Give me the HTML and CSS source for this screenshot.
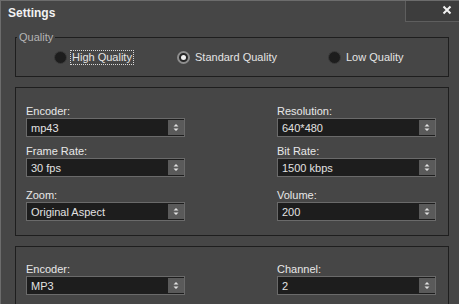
FILE: index.html
```html
<!DOCTYPE html>
<html lang="en">
<head>
  <meta charset="UTF-8" />
  <title>Settings</title>
  <link rel="stylesheet" href="styles.css">
</head>
<body>

  <div class="window">
    <div class="titlebar">
      <span class="title">Settings</span>
      <button class="close">
        <svg width="10" height="10" viewBox="0 0 10 10"><path d="M1.5 1.5 L8.5 8.5 M8.5 1.5 L1.5 8.5" stroke="#f2f2f2" stroke-width="2"/></svg>
      </button>
    </div>

    <!-- Quality -->
    <fieldset class="quality">
      <legend>Quality</legend>
      <div class="radios">
        <label class="radio"><span class="dot"></span><span class="text focus">High Quality</span></label>
        <label class="radio"><span class="dot checked"></span><span class="text">Standard Quality</span></label>
        <label class="radio"><span class="dot"></span><span class="text">Low Quality</span></label>
      </div>
    </fieldset>

    <!-- Video -->
    <div class="panel">
      <div class="field">
        <div class="label">Encoder:</div>
        <div class="select"><span class="value">mp43</span><span class="spin"><svg width="16" height="15" viewBox="0 0 16 15"><path d="M5.5 6.5 L8 4 L10.5 6.5 Z M5.5 8.5 L8 11 L10.5 8.5 Z" fill="#e0e0e0"/></svg></span></div>
      </div>
      <div class="field">
        <div class="label">Resolution:</div>
        <div class="select"><span class="value">640*480</span><span class="spin"><svg width="16" height="15" viewBox="0 0 16 15"><path d="M5.5 6.5 L8 4 L10.5 6.5 Z M5.5 8.5 L8 11 L10.5 8.5 Z" fill="#e0e0e0"/></svg></span></div>
      </div>
      <div class="field">
        <div class="label">Frame Rate:</div>
        <div class="select"><span class="value">30 fps</span><span class="spin"><svg width="16" height="15" viewBox="0 0 16 15"><path d="M5.5 6.5 L8 4 L10.5 6.5 Z M5.5 8.5 L8 11 L10.5 8.5 Z" fill="#e0e0e0"/></svg></span></div>
      </div>
      <div class="field">
        <div class="label">Bit Rate:</div>
        <div class="select"><span class="value">1500 kbps</span><span class="spin"><svg width="16" height="15" viewBox="0 0 16 15"><path d="M5.5 6.5 L8 4 L10.5 6.5 Z M5.5 8.5 L8 11 L10.5 8.5 Z" fill="#e0e0e0"/></svg></span></div>
      </div>
      <div class="field wide-gap">
        <div class="label">Zoom:</div>
        <div class="select"><span class="value">Original Aspect</span><span class="spin"><svg width="16" height="15" viewBox="0 0 16 15"><path d="M5.5 6.5 L8 4 L10.5 6.5 Z M5.5 8.5 L8 11 L10.5 8.5 Z" fill="#e0e0e0"/></svg></span></div>
      </div>
      <div class="field wide-gap">
        <div class="label">Volume:</div>
        <div class="select"><span class="value">200</span><span class="spin"><svg width="16" height="15" viewBox="0 0 16 15"><path d="M5.5 6.5 L8 4 L10.5 6.5 Z M5.5 8.5 L8 11 L10.5 8.5 Z" fill="#e0e0e0"/></svg></span></div>
      </div>
    </div>

    <!-- Audio -->
    <div class="panel audio">
      <div class="field">
        <div class="label">Encoder:</div>
        <div class="select"><span class="value">MP3</span><span class="spin"><svg width="16" height="15" viewBox="0 0 16 15"><path d="M5.5 6.5 L8 4 L10.5 6.5 Z M5.5 8.5 L8 11 L10.5 8.5 Z" fill="#e0e0e0"/></svg></span></div>
      </div>
      <div class="field">
        <div class="label">Channel:</div>
        <div class="select"><span class="value">2</span><span class="spin"><svg width="16" height="15" viewBox="0 0 16 15"><path d="M5.5 6.5 L8 4 L10.5 6.5 Z M5.5 8.5 L8 11 L10.5 8.5 Z" fill="#e0e0e0"/></svg></span></div>
      </div>
    </div>
  </div>

</body>
</html>
```

FILE: styles.css
```css
* { margin: 0; padding: 0; box-sizing: border-box; }

body {
  width: 459px;
  height: 304px;
  overflow: hidden;
  background: #464646;
  font-family: 'Liberation Sans', Arial, sans-serif;
  font-size: 11px;
  color: #e4e4e4;
}

.window {
  height: 304px;
  border-left: 1px solid #6c6c6c;
  border-top: 1px solid #6c6c6c;
}

.titlebar {
  display: flex;
  justify-content: space-between;
  height: 21px;
}

.title {
  padding: 2px 0 0 7px;
  font-size: 12px;
  font-weight: bold;
  line-height: 21px;
  color: #f2f2f2;
}

.close {
  width: 54px;
  height: 21px;
  background: #3d3d3d;
  border: none;
  border-left: 1px solid #5e5e5e;
  border-bottom: 1px solid #5e5e5e;
  display: flex;
  align-items: center;
  justify-content: flex-end;
  padding-right: 7px;
  padding-bottom: 2px;
}

/* Quality group */
.quality {
  margin: 9px 10px 0 14px;
  border: 1px solid #1e1e1e;
  padding: 0 0 11px 0;
}

.quality legend {
  margin-left: 1px;
  padding: 0 2px;
  line-height: 13px;
  color: #b4b4b4;
}

.radios {
  display: grid;
  grid-template-columns: 123px 151px auto;
  padding-left: 38px;
  padding-top: 6px;
}

.radio {
  display: flex;
  align-items: center;
  height: 15px;
}

.dot {
  width: 13px;
  height: 13px;
  border-radius: 50%;
  background: #1d1d1d;
  border: 1px solid #3a3a3a;
  margin-right: 3px;
  display: flex;
  align-items: center;
  justify-content: center;
}

.dot.checked {
  border: 2px solid #8e8e8e;
  background: #262626;
}

.dot.checked::after {
  content: "";
  width: 5px;
  height: 5px;
  border-radius: 50%;
  background: #f0f0f0;
}

.text {
  padding: 0 1px;
  line-height: 13px;
  border: 1px solid transparent;
}

.text.focus { border: 1px dotted #d8d8d8; }

/* Panels */
.panel {
  margin: 10px 10px 0 14px;
  border: 1px solid #1e1e1e;
  padding: 17px 0 14px 10px;
  display: grid;
  grid-template-columns: 159px 159px;
  column-gap: 92px;
  row-gap: 8px;
}

.panel .wide-gap { margin-top: 4px; }

.panel.audio { padding-top: 16px; }

.label {
  line-height: 13px;
  color: #e8e8e8;
}

.select {
  height: 19px;
  display: flex;
  align-items: center;
  justify-content: space-between;
  background: #1d1d1d;
  border: 1px solid #6a6a6a;
  padding-left: 4px;
  color: #e2e2e2;
}

.spin {
  width: 16px;
  height: 15px;
  background: #5a5a5a;
  display: flex;
}
```
